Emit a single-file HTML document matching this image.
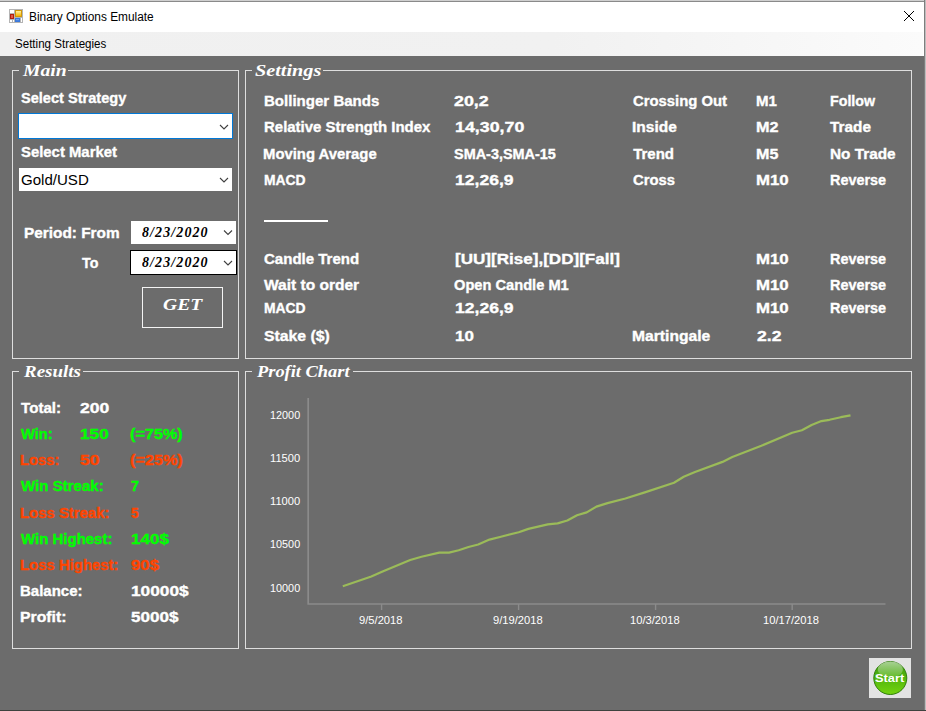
<!DOCTYPE html>
<html lang="en">
<head>
<meta charset="utf-8">
<title>Binary Options Emulate</title>
<style>
html,body{margin:0;padding:0;}
body{width:926px;height:711px;overflow:hidden;position:relative;background:#6c6c6c;font-family:"Liberation Sans",sans-serif;}
.abs{position:absolute;box-sizing:border-box;}
.t{position:absolute;white-space:nowrap;transform-origin:0 50%;margin:0;padding:0;}
.b{-webkit-text-stroke:0.35px currentColor;}
#titlebar{left:0;top:0;width:924px;height:56px;background:#fff;border-top:1px solid #cfcfcf;}
#topline{left:0;top:1px;width:926px;height:1px;background:#8a8a8a;}
#menubar{left:0;top:32px;width:923px;height:24px;background:linear-gradient(90deg,#f0f0f0 0%,#f1f1f1 60%,#fbfbfb 100%);}
#rightedge{left:924px;top:0;width:2px;height:711px;background:linear-gradient(90deg,#7e7e7e 0,#7e7e7e 50%,#bdbdbd 50%,#bdbdbd 100%);}
#bottomedge{left:0;top:710px;width:926px;height:1px;background:#3e423e;}
.gb{border:1px solid #dedede;}
.gap{background:#6c6c6c;height:3px;}
.white{background:#fff;}
</style>
</head>
<body>
<div class="abs" id="titlebar"></div>
<div class="abs" id="topline"></div>
<div class="abs" id="menubar"></div>
<div class="abs" id="rightedge"></div>
<div class="abs" id="bottomedge"></div>

<!-- app icon -->
<svg class="abs" style="left:9px;top:9px" width="14" height="14" viewBox="0 0 14 14">
  <defs>
    <linearGradient id="iy" x1="0" y1="0" x2="0" y2="1"><stop offset="0" stop-color="#fff0a0"/><stop offset="1" stop-color="#f6b400"/></linearGradient>
    <linearGradient id="ib" x1="0" y1="0" x2="0" y2="1"><stop offset="0" stop-color="#8ab4f4"/><stop offset="1" stop-color="#2f6fd6"/></linearGradient>
  </defs>
  <rect x="0" y="0" width="14" height="14" fill="#b4b4b4"/>
  <rect x="1" y="1" width="4" height="3" fill="#ffffff"/>
  <rect x="1" y="5" width="4" height="5" fill="#b3200f"/>
  <rect x="2" y="6" width="2" height="3" fill="#e05a48"/>
  <rect x="1" y="11" width="2" height="2" fill="#ffffff"/>
  <rect x="4" y="11" width="1" height="2" fill="#ffffff"/>
  <rect x="6" y="1" width="7" height="7" fill="#cf960c"/>
  <rect x="7" y="2" width="5" height="5" fill="url(#iy)"/>
  <rect x="6" y="9" width="5" height="4" fill="#3a78dc"/>
  <rect x="7" y="10" width="3" height="2" fill="url(#ib)"/>
  <rect x="12" y="9" width="1" height="4" fill="#ffffff"/>
</svg>

<!-- close X -->
<svg class="abs" style="left:900px;top:8px" width="18" height="16" viewBox="0 0 18 16">
  <path d="M4 3 L14 13 M14 3 L4 13" stroke="#000" stroke-width="1" fill="none"/>
</svg>

<!-- group boxes -->
<div class="abs gb" style="left:12px;top:70px;width:227px;height:289px;"></div>
<div class="abs gb" style="left:245px;top:70px;width:667px;height:289px;"></div>
<div class="abs gb" style="left:12px;top:371px;width:227px;height:278px;"></div>
<div class="abs gb" style="left:245px;top:371px;width:667px;height:278px;"></div>
<!-- title gaps -->
<div class="abs gap" style="left:19px;top:69px;width:49px;"></div>
<div class="abs gap" style="left:252px;top:69px;width:71px;"></div>
<div class="abs gap" style="left:19px;top:370px;width:64px;"></div>
<div class="abs gap" style="left:252px;top:370px;width:101px;"></div>

<!-- combos -->
<div class="abs white" style="left:18px;top:113px;width:215px;height:26px;border:1px solid #0078d7;"></div>
<div class="abs white" style="left:19px;top:168px;width:213px;height:23px;"></div>
<svg class="abs" style="left:216px;top:120px" width="16" height="14" viewBox="0 0 16 14"><path d="M4 5 L8 9 L12 5" stroke="#404040" stroke-width="1.1" fill="none"/></svg>
<svg class="abs" style="left:216px;top:173px" width="16" height="14" viewBox="0 0 16 14"><path d="M4 5 L8 9 L12 5" stroke="#404040" stroke-width="1.1" fill="none"/></svg>

<!-- date pickers -->
<div class="abs white" style="left:131px;top:221px;width:105px;height:23px;"></div>
<div class="abs white" style="left:130px;top:250px;width:107px;height:25px;border:1px solid #000;"></div>
<svg class="abs" style="left:220px;top:225px" width="16" height="14" viewBox="0 0 16 14"><path d="M4 5.5 L8 9.5 L12 5.5" stroke="#404040" stroke-width="1.1" fill="none"/></svg>
<svg class="abs" style="left:220px;top:255px" width="16" height="14" viewBox="0 0 16 14"><path d="M4 6 L8 10 L12 6" stroke="#404040" stroke-width="1.1" fill="none"/></svg>

<!-- GET button -->
<div class="abs" style="left:142px;top:287px;width:81px;height:41px;border:1px solid #f4f4f4;"></div>

<!-- dashes -->
<div class="abs" style="left:264px;top:219.5px;width:64px;height:2px;background:#fff;"></div>

<!-- chart -->
<svg class="abs" style="left:245px;top:371px" width="667" height="278" viewBox="245 371 667 278">
  <path d="M308.2 398 V604 H885.5" stroke="#8b8b8b" stroke-width="1.7" fill="none"/>
  <path d="M381.6 604 V610 M518.6 604 V610 M655.6 604 V610 M792.2 604 V610" stroke="#8b8b8b" stroke-width="1.4" fill="none"/>
  <polyline fill="none" stroke="#9bbb59" stroke-width="2.2" stroke-linejoin="round" stroke-linecap="butt"
   points="342.8,586.3 371.3,576.5 382.6,571.4 410.2,560 421.5,556.8 439.3,552.6 449,552.6 458.7,550.3 468.5,547 478.2,544.5 489.5,539.6 500.9,536.7 518.7,532.2 528.4,528.9 547.8,524.4 557.6,523.4 567.3,520.5 577,515.3 586.7,512.4 596.4,506.6 607.5,503.1 625.4,498.5 644.8,492.4 674,482.7 683.7,476.8 695,472 722.5,461.9 732.3,457.1 761.4,445.7 792.2,432.8 801.9,430.2 811.6,425 821.4,421.1 829.5,419.8 840.8,417.2 850.5,415.3"/>
</svg>

<!-- Start button -->
<div class="abs" style="left:869px;top:658px;width:42px;height:40px;background:#e3e3e3;"></div>
<svg class="abs" style="left:869px;top:658px" width="42" height="40" viewBox="0 0 42 40">
  <defs>
    <linearGradient id="gg" x1="0" y1="0" x2="0" y2="1">
      <stop offset="0" stop-color="#3f9a10"/><stop offset="0.45" stop-color="#4fb30d"/><stop offset="1" stop-color="#74d40f"/>
    </linearGradient>
    <linearGradient id="gl" x1="0" y1="0" x2="0" y2="1">
      <stop offset="0" stop-color="#ffffff" stop-opacity="0.55"/><stop offset="1" stop-color="#ffffff" stop-opacity="0.12"/>
    </linearGradient>
  </defs>
  <circle cx="21.3" cy="20" r="16.5" fill="url(#gg)" stroke="#2f7d0a" stroke-width="1"/>
  <ellipse cx="21.3" cy="11.5" rx="12.5" ry="8" fill="url(#gl)"/>
</svg>

<!-- date text -->
<div class="t" style='left:142px;top:224px;width:66.5px;overflow:hidden;font:italic bold 14px "Liberation Serif",serif;line-height:18px;letter-spacing:1.1px;color:#000;'>8/23/2020</div>
<div class="t" style='left:142px;top:254px;width:66.5px;overflow:hidden;font:italic bold 14px "Liberation Serif",serif;line-height:18px;letter-spacing:1.1px;color:#000;'>8/23/2020</div>

<div class="t" style='left:29.05px;top:9px;font:normal normal 12px "Liberation Sans", sans-serif;line-height:17px;color:#000;transform:translate(0px,0px) scaleX(0.9889);'>Binary Options Emulate</div>
<div class="t" style='left:14.69px;top:36px;font:normal normal 12px "Liberation Sans", sans-serif;line-height:17px;color:#000;transform:translate(0px,0px) scaleX(0.9641);'>Setting Strategies</div>
<div class="t b" style='left:21.00px;top:88px;font:normal bold 15px "Liberation Sans", sans-serif;line-height:20px;color:#ffffff;transform:translate(0px,-0.5px) scaleX(0.9712);'>Select Strategy</div>
<div class="t b" style='left:21.03px;top:142px;font:normal bold 15px "Liberation Sans", sans-serif;line-height:20px;color:#ffffff;transform:translate(0px,-0.5px) scaleX(0.9920);'>Select Market</div>
<div class="t" style='left:21.10px;top:170px;font:normal normal 15px "Liberation Sans", sans-serif;line-height:20px;color:#000;transform:translate(0px,0px) scaleX(1.0040);'>Gold/USD</div>
<div class="t b" style='left:23.75px;top:223px;font:normal bold 15px "Liberation Sans", sans-serif;line-height:20px;color:#ffffff;transform:translate(0px,-0.5px) scaleX(1.0249);'>Period: From</div>
<div class="t b" style='left:82.30px;top:253px;font:normal bold 15px "Liberation Sans", sans-serif;line-height:20px;color:#ffffff;transform:translate(0px,-0.5px) scaleX(0.9502);'>To</div>
<div class="t b" style='left:263.78px;top:91px;font:normal bold 15px "Liberation Sans", sans-serif;line-height:20px;color:#ffffff;transform:translate(0px,-0.5px) scaleX(1.0030);'>Bollinger Bands</div>
<div class="t b" style='left:263.73px;top:117px;font:normal bold 15px "Liberation Sans", sans-serif;line-height:20px;color:#ffffff;transform:translate(0px,-0.5px) scaleX(0.9978);'>Relative Strength Index</div>
<div class="t b" style='left:263.37px;top:144px;font:normal bold 15px "Liberation Sans", sans-serif;line-height:20px;color:#ffffff;transform:translate(0px,-0.5px) scaleX(0.9904);'>Moving Average</div>
<div class="t b" style='left:263.63px;top:170px;font:normal bold 15px "Liberation Sans", sans-serif;line-height:20px;color:#ffffff;transform:translate(0px,-0.5px) scaleX(0.9257);'>MACD</div>
<div class="t b" style='left:264.15px;top:249px;font:normal bold 15px "Liberation Sans", sans-serif;line-height:20px;color:#ffffff;transform:translate(0px,-0.5px) scaleX(1.0015);'>Candle Trend</div>
<div class="t b" style='left:264.30px;top:275px;font:normal bold 15px "Liberation Sans", sans-serif;line-height:20px;color:#ffffff;transform:translate(0px,-0.5px) scaleX(1.0347);'>Wait to order</div>
<div class="t b" style='left:263.63px;top:298px;font:normal bold 15px "Liberation Sans", sans-serif;line-height:20px;color:#ffffff;transform:translate(0px,-0.5px) scaleX(0.9257);'>MACD</div>
<div class="t b" style='left:264.30px;top:326px;font:normal bold 15px "Liberation Sans", sans-serif;line-height:20px;color:#ffffff;transform:translate(0px,-0.5px) scaleX(1.0507);'>Stake ($)</div>
<div class="t b" style='left:454.05px;top:91px;font:normal bold 15px "Liberation Sans", sans-serif;line-height:20px;color:#ffffff;transform:translate(0px,-0.5px) scaleX(1.1901);'>20,2</div>
<div class="t b" style='left:454.85px;top:117px;font:normal bold 15px "Liberation Sans", sans-serif;line-height:20px;color:#ffffff;transform:translate(0px,-0.5px) scaleX(1.1870);'>14,30,70</div>
<div class="t b" style='left:454.05px;top:144px;font:normal bold 15px "Liberation Sans", sans-serif;line-height:20px;color:#ffffff;transform:translate(0px,-0.5px) scaleX(0.9621);'>SMA-3,SMA-15</div>
<div class="t b" style='left:454.86px;top:170px;font:normal bold 15px "Liberation Sans", sans-serif;line-height:20px;color:#ffffff;transform:translate(0px,-0.5px) scaleX(1.1710);'>12,26,9</div>
<div class="t b" style='left:454.99px;top:249px;font:normal bold 15px "Liberation Sans", sans-serif;line-height:20px;color:#ffffff;transform:translate(0px,-0.5px) scaleX(1.1373);'>[UU][Rise],[DD][Fall]</div>
<div class="t b" style='left:454.03px;top:275px;font:normal bold 15px "Liberation Sans", sans-serif;line-height:20px;color:#ffffff;transform:translate(0px,-0.5px) scaleX(0.9762);'>Open Candle M1</div>
<div class="t b" style='left:454.86px;top:298px;font:normal bold 15px "Liberation Sans", sans-serif;line-height:20px;color:#ffffff;transform:translate(0px,-0.5px) scaleX(1.1710);'>12,26,9</div>
<div class="t b" style='left:454.89px;top:326px;font:normal bold 15px "Liberation Sans", sans-serif;line-height:20px;color:#ffffff;transform:translate(0px,-0.5px) scaleX(1.1313);'>10</div>
<div class="t b" style='left:633.02px;top:91px;font:normal bold 15px "Liberation Sans", sans-serif;line-height:20px;color:#ffffff;transform:translate(0px,-0.5px) scaleX(0.9898);'>Crossing Out</div>
<div class="t b" style='left:632.19px;top:117px;font:normal bold 15px "Liberation Sans", sans-serif;line-height:20px;color:#ffffff;transform:translate(0px,-0.5px) scaleX(1.0328);'>Inside</div>
<div class="t b" style='left:633.15px;top:144px;font:normal bold 15px "Liberation Sans", sans-serif;line-height:20px;color:#ffffff;transform:translate(0px,-0.5px) scaleX(1.0000);'>Trend</div>
<div class="t b" style='left:633.02px;top:170px;font:normal bold 15px "Liberation Sans", sans-serif;line-height:20px;color:#ffffff;transform:translate(0px,-0.5px) scaleX(0.9879);'>Cross</div>
<div class="t b" style='left:632.42px;top:326px;font:normal bold 15px "Liberation Sans", sans-serif;line-height:20px;color:#ffffff;transform:translate(0px,-0.5px) scaleX(1.0434);'>Martingale</div>
<div class="t b" style='left:756.47px;top:91px;font:normal bold 15px "Liberation Sans", sans-serif;line-height:20px;color:#ffffff;transform:translate(0px,-0.5px) scaleX(1.0044);'>M1</div>
<div class="t b" style='left:756.20px;top:117px;font:normal bold 15px "Liberation Sans", sans-serif;line-height:20px;color:#ffffff;transform:translate(0px,-0.5px) scaleX(1.0815);'>M2</div>
<div class="t b" style='left:756.12px;top:144px;font:normal bold 15px "Liberation Sans", sans-serif;line-height:20px;color:#ffffff;transform:translate(0px,-0.5px) scaleX(1.0718);'>M5</div>
<div class="t b" style='left:756.02px;top:170px;font:normal bold 15px "Liberation Sans", sans-serif;line-height:20px;color:#ffffff;transform:translate(0px,-0.5px) scaleX(1.1208);'>M10</div>
<div class="t b" style='left:756.02px;top:249px;font:normal bold 15px "Liberation Sans", sans-serif;line-height:20px;color:#ffffff;transform:translate(0px,-0.5px) scaleX(1.1208);'>M10</div>
<div class="t b" style='left:756.02px;top:275px;font:normal bold 15px "Liberation Sans", sans-serif;line-height:20px;color:#ffffff;transform:translate(0px,-0.5px) scaleX(1.1208);'>M10</div>
<div class="t b" style='left:756.02px;top:298px;font:normal bold 15px "Liberation Sans", sans-serif;line-height:20px;color:#ffffff;transform:translate(0px,-0.5px) scaleX(1.1208);'>M10</div>
<div class="t b" style='left:757.07px;top:326px;font:normal bold 15px "Liberation Sans", sans-serif;line-height:20px;color:#ffffff;transform:translate(0px,-0.5px) scaleX(1.1741);'>2.2</div>
<div class="t b" style='left:830.03px;top:91px;font:normal bold 15px "Liberation Sans", sans-serif;line-height:20px;color:#ffffff;transform:translate(0px,-0.5px) scaleX(0.9491);'>Follow</div>
<div class="t b" style='left:830.40px;top:117px;font:normal bold 15px "Liberation Sans", sans-serif;line-height:20px;color:#ffffff;transform:translate(0px,-0.5px) scaleX(1.0233);'>Trade</div>
<div class="t b" style='left:829.93px;top:144px;font:normal bold 15px "Liberation Sans", sans-serif;line-height:20px;color:#ffffff;transform:translate(0px,-0.5px) scaleX(1.0227);'>No Trade</div>
<div class="t b" style='left:830.02px;top:170px;font:normal bold 15px "Liberation Sans", sans-serif;line-height:20px;color:#ffffff;transform:translate(0px,-0.5px) scaleX(0.9615);'>Reverse</div>
<div class="t b" style='left:830.02px;top:249px;font:normal bold 15px "Liberation Sans", sans-serif;line-height:20px;color:#ffffff;transform:translate(0px,-0.5px) scaleX(0.9615);'>Reverse</div>
<div class="t b" style='left:830.02px;top:275px;font:normal bold 15px "Liberation Sans", sans-serif;line-height:20px;color:#ffffff;transform:translate(0px,-0.5px) scaleX(0.9615);'>Reverse</div>
<div class="t b" style='left:830.02px;top:298px;font:normal bold 15px "Liberation Sans", sans-serif;line-height:20px;color:#ffffff;transform:translate(0px,-0.5px) scaleX(0.9615);'>Reverse</div>
<div class="t b" style='left:20.77px;top:398px;font:normal bold 15px "Liberation Sans", sans-serif;line-height:20px;color:#ffffff;transform:translate(0px,-0.5px) scaleX(1.0099);'>Total:</div>
<div class="t b" style='left:79.81px;top:398px;font:normal bold 15px "Liberation Sans", sans-serif;line-height:20px;color:#ffffff;transform:translate(0px,-0.5px) scaleX(1.1719);'>200</div>
<div class="t b" style='left:20.81px;top:424px;font:normal bold 15px "Liberation Sans", sans-serif;line-height:20px;color:#00ff00;transform:translate(0px,-0.5px) scaleX(0.9823);'>Win:</div>
<div class="t b" style='left:80.40px;top:424px;font:normal bold 15px "Liberation Sans", sans-serif;line-height:20px;color:#00ff00;transform:translate(0px,-0.5px) scaleX(1.1465);'>150</div>
<div class="t b" style='left:130.28px;top:424px;font:normal bold 15px "Liberation Sans", sans-serif;line-height:20px;color:#00ff00;transform:translate(0px,-0.5px) scaleX(1.0819);'>(=75%)</div>
<div class="t b" style='left:19.81px;top:450px;font:normal bold 15px "Liberation Sans", sans-serif;line-height:20px;color:#ff4500;transform:translate(0px,-0.5px) scaleX(0.9866);'>Loss:</div>
<div class="t b" style='left:79.82px;top:450px;font:normal bold 15px "Liberation Sans", sans-serif;line-height:20px;color:#ff4500;transform:translate(0px,-0.5px) scaleX(1.1693);'>50</div>
<div class="t b" style='left:130.28px;top:450px;font:normal bold 15px "Liberation Sans", sans-serif;line-height:20px;color:#ff4500;transform:translate(0px,-0.5px) scaleX(1.0819);'>(=25%)</div>
<div class="t b" style='left:20.80px;top:476px;font:normal bold 15px "Liberation Sans", sans-serif;line-height:20px;color:#00ff00;transform:translate(0px,-0.5px) scaleX(1.0037);'>Win Streak:</div>
<div class="t b" style='left:131.03px;top:476px;font:normal bold 15px "Liberation Sans", sans-serif;line-height:20px;color:#00ff00;transform:translate(0px,-0.5px) scaleX(0.9563);'>7</div>
<div class="t b" style='left:19.90px;top:503px;font:normal bold 15px "Liberation Sans", sans-serif;line-height:20px;color:#ff4500;transform:translate(0px,-0.5px) scaleX(0.9927);'>Loss Streak:</div>
<div class="t b" style='left:131.12px;top:503px;font:normal bold 15px "Liberation Sans", sans-serif;line-height:20px;color:#ff4500;transform:translate(0px,-0.5px) scaleX(0.9172);'>5</div>
<div class="t b" style='left:20.81px;top:529px;font:normal bold 15px "Liberation Sans", sans-serif;line-height:20px;color:#00ff00;transform:translate(0px,-0.5px) scaleX(0.9990);'>Win Highest:</div>
<div class="t b" style='left:131.33px;top:529px;font:normal bold 15px "Liberation Sans", sans-serif;line-height:20px;color:#00ff00;transform:translate(0px,-0.5px) scaleX(1.1386);'>140$</div>
<div class="t b" style='left:19.99px;top:555px;font:normal bold 15px "Liberation Sans", sans-serif;line-height:20px;color:#ff4500;transform:translate(0px,-0.5px) scaleX(0.9935);'>Loss Highest:</div>
<div class="t b" style='left:131.13px;top:555px;font:normal bold 15px "Liberation Sans", sans-serif;line-height:20px;color:#ff4500;transform:translate(0px,-0.5px) scaleX(1.1192);'>90$</div>
<div class="t b" style='left:19.98px;top:581px;font:normal bold 15px "Liberation Sans", sans-serif;line-height:20px;color:#ffffff;transform:translate(0px,-0.5px) scaleX(0.9999);'>Balance:</div>
<div class="t b" style='left:131.18px;top:581px;font:normal bold 15px "Liberation Sans", sans-serif;line-height:20px;color:#ffffff;transform:translate(0px,-0.5px) scaleX(1.1513);'>10000$</div>
<div class="t b" style='left:19.88px;top:607px;font:normal bold 15px "Liberation Sans", sans-serif;line-height:20px;color:#ffffff;transform:translate(0px,-0.5px) scaleX(1.0515);'>Profit:</div>
<div class="t b" style='left:131.08px;top:607px;font:normal bold 15px "Liberation Sans", sans-serif;line-height:20px;color:#ffffff;transform:translate(0px,-0.5px) scaleX(1.1378);'>5000$</div>
<div class="t" style='left:22.98px;top:60px;font:italic bold 16px "Liberation Serif", serif;line-height:21px;color:#ffffff;transform:translate(0px,0px) scaleX(1.2279);'>Main</div>
<div class="t" style='left:255.03px;top:60px;font:italic bold 16px "Liberation Serif", serif;line-height:21px;color:#ffffff;transform:translate(0px,0px) scaleX(1.2644);'>Settings</div>
<div class="t" style='left:23.94px;top:361px;font:italic bold 16px "Liberation Serif", serif;line-height:21px;color:#ffffff;transform:translate(0px,0px) scaleX(1.1840);'>Results</div>
<div class="t" style='left:257.06px;top:361px;font:italic bold 16px "Liberation Serif", serif;line-height:21px;color:#ffffff;transform:translate(0px,0px) scaleX(1.1500);'>Profit Chart</div>
<div class="t" style='left:163.48px;top:294px;font:italic bold 16px "Liberation Serif", serif;line-height:21px;color:#ffffff;transform:translate(0px,0px) scaleX(1.2228);'>GET</div>
<div class="t" style='left:875.20px;top:670px;font:normal bold 11px "Liberation Sans", sans-serif;line-height:16px;color:#ffffff;transform:translate(0px,0px) scaleX(1.1654);'>Start</div>
<div class="t" style='left:270.34px;top:407px;font:normal normal 11px "Liberation Sans", sans-serif;line-height:16px;color:#ffffff;transform:translate(0px,0px) scaleX(0.9862);'>12000</div>
<div class="t" style='left:270.33px;top:450px;font:normal normal 11px "Liberation Sans", sans-serif;line-height:16px;color:#ffffff;transform:translate(0px,0px) scaleX(1.0159);'>11500</div>
<div class="t" style='left:270.33px;top:493px;font:normal normal 11px "Liberation Sans", sans-serif;line-height:16px;color:#ffffff;transform:translate(0px,0px) scaleX(1.0159);'>11000</div>
<div class="t" style='left:270.34px;top:536px;font:normal normal 11px "Liberation Sans", sans-serif;line-height:16px;color:#ffffff;transform:translate(0px,0px) scaleX(0.9862);'>10500</div>
<div class="t" style='left:270.34px;top:580px;font:normal normal 11px "Liberation Sans", sans-serif;line-height:16px;color:#ffffff;transform:translate(0px,0px) scaleX(0.9862);'>10000</div>
<div class="t" style='left:359.00px;top:612px;font:normal normal 11px "Liberation Sans", sans-serif;line-height:16px;color:#ffffff;transform:translate(0px,0px) scaleX(1.0164);'>9/5/2018</div>
<div class="t" style='left:493.20px;top:612px;font:normal normal 11px "Liberation Sans", sans-serif;line-height:16px;color:#ffffff;transform:translate(0px,0px) scaleX(1.0146);'>9/19/2018</div>
<div class="t" style='left:629.99px;top:612px;font:normal normal 11px "Liberation Sans", sans-serif;line-height:16px;color:#ffffff;transform:translate(0px,0px) scaleX(1.0155);'>10/3/2018</div>
<div class="t" style='left:763.34px;top:612px;font:normal normal 11px "Liberation Sans", sans-serif;line-height:16px;color:#ffffff;transform:translate(0px,0px) scaleX(1.0151);'>10/17/2018</div>
</body>
</html>
